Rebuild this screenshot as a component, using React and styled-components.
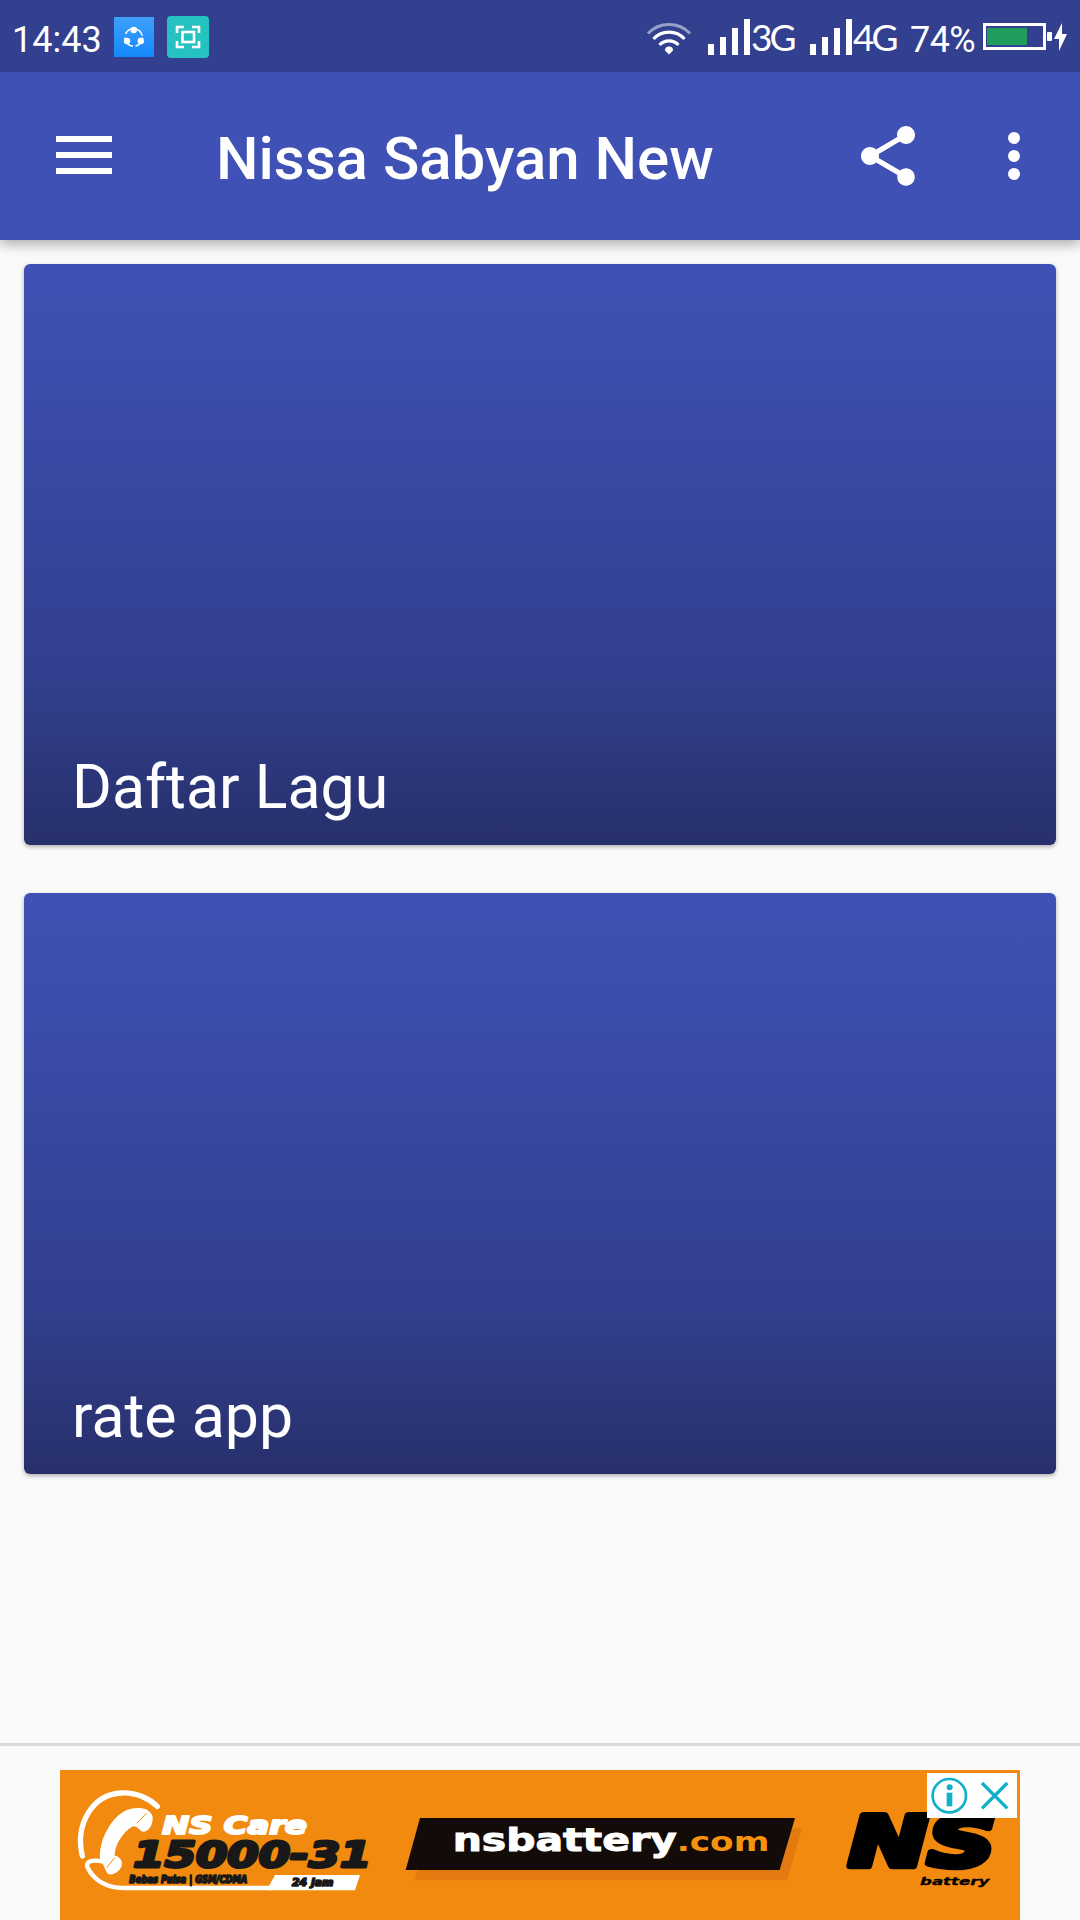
import React from "react";
import styled, { createGlobalStyle } from "styled-components";

const GlobalStyle = createGlobalStyle`
  * {
    box-sizing: border-box;
  }
  body {
    margin: 0;
    background: #fafafa;
    font-family: Roboto, "Liberation Sans", sans-serif;
  }
  svg {
    display: block;
    flex-shrink: 0;
  }
`;

const Screen = styled.div`
  width: 1080px;
  height: 1920px;
  overflow: hidden;
  display: flex;
  flex-direction: column;
  background: #fafafa;
`;

const StatusBar = styled.div`
  position: relative;
  z-index: 1;
  height: 72px;
  flex-shrink: 0;
  display: flex;
  align-items: center;
  padding: 2px 12px 0 12px;
  color: #fff;
  background: #32408f;
`;

const Clock = styled.span`
  width: 102px;
  font-size: 36px;
  line-height: 42px;
  padding-top: 6px;
`;

const Notifications = styled.div`
  display: flex;
  align-items: center;
  gap: 13px;
`;

const StatusIcons = styled.div`
  margin-left: auto;
  display: flex;
  align-items: center;
`;

const Signal = styled.div`
  display: flex;
  align-items: center;
  width: 102px;
`;

const Network = styled.span`
  font-family: Lato, sans-serif;
  font-size: 37px;
  line-height: 42px;
  letter-spacing: -3px;
`;

const Percent = styled.span`
  width: 73px;
  font-size: 36px;
  line-height: 42px;
  padding-top: 6px;
  letter-spacing: -0.6px;
`;

const AppBar = styled.header`
  height: 168px;
  flex-shrink: 0;
  display: flex;
  align-items: center;
  padding: 0 30px 0 56px;
  color: #fff;
  background: #3f51b5;
  box-shadow: 0 4px 12px rgba(0, 0, 0, 0.32);
`;

const Title = styled.h1`
  flex: 1;
  margin: 0 0 0 104px;
  padding-top: 6px;
  font-size: 60px;
  font-weight: 500;
  line-height: 72px;
`;

const Actions = styled.div`
  display: flex;
  gap: 54px;
`;

const List = styled.main`
  flex: 1;
  display: flex;
  flex-direction: column;
  gap: 48px;
  padding: 24px;
`;

const Card = styled.section`
  height: 581px;
  display: flex;
  align-items: flex-end;
  padding: 0 48px 21px;
  border-radius: 6px;
  color: #fff;
  font-size: 60.8px;
  line-height: 72px;
  background: linear-gradient(#3f51b5 0%, #323f8e 71%, #27306b 100%);
  box-shadow: 0 2px 4px rgba(0, 0, 0, 0.3);
`;

const AdSlot = styled.footer`
  height: 177px;
  flex-shrink: 0;
  padding: 24px 60px 0;
  border-top: 3px solid #dadada;
`;

const items = ["Daftar Lagu", "rate app"];

const ShareItIcon = () => (
  <svg width="40" height="40" viewBox="0 0 40 40">
    <defs>
      <linearGradient id="blue" x1="0" y1="0" x2="0" y2="1">
        <stop offset="0" stopColor="#3fa0fb" />
        <stop offset="1" stopColor="#1488fb" />
      </linearGradient>
    </defs>
    <rect width="40" height="40" fill="url(#blue)" />
    <circle cx="19.7" cy="20.5" r="8.8" fill="none" stroke="#fff" strokeWidth="1.5" strokeDasharray="12 2.5 13 3.5 22 2.3" />
    <circle cx="19.7" cy="13" r="3.2" fill="#fff" />
    <circle cx="13" cy="24" r="3.2" fill="#fff" />
    <circle cx="26.8" cy="24" r="3.2" fill="#fff" />
  </svg>
);

const CaptureIcon = () => (
  <svg width="42" height="42" viewBox="0 0 42 42">
    <rect width="42" height="42" rx="4" fill="#25c2c0" />
    <g fill="none" stroke="#fff" strokeWidth="2.6">
      <path d="M10 17v-6h7M25 11h7v6M32 25v6h-7M17 31h-7v-6" />
      <rect x="15.5" y="16" width="11.500" height="10" />
    </g>
  </svg>
);

const WifiIcon = () => (
  <svg width="46" height="36" viewBox="0 0 46 36">
    <g fill="none" stroke="#fff" strokeWidth="3.2">
      <path d="M2 14.5a29 29 0 0 1 42 0" opacity="0.5" />
      <path d="M7.5 20a21 21 0 0 1 31 0" />
      <path d="M13.5 26a13 13 0 0 1 19 0" />
    </g>
    <path d="M23 35.5l-4-4a4 4 0 0 1 8 0z" fill="#fff" />
  </svg>
);

const BarsIcon = () => (
  <svg width="43" height="36" viewBox="0 0 43 36" fill="#fff">
    <rect x="0" y="25" width="6" height="11" />
    <rect x="12" y="18" width="6" height="18" />
    <rect x="24" y="9" width="6" height="27" />
    <rect x="36" y="0" width="6" height="36" />
  </svg>
);

const BatteryIcon = () => (
  <svg width="85" height="28" viewBox="0 0 85 28">
    <rect x="1.5" y="1.5" width="60" height="24" fill="none" stroke="#fff" strokeWidth="3" />
    <rect x="4" y="5" width="40" height="17" fill="#1f9d5c" />
    <rect x="64" y="9" width="5" height="9" rx="1" fill="#fff" />
    <path d="M79 0l-8 16h5l0 12 8-17h-5z" fill="#fff" />
  </svg>
);

const MenuIcon = () => (
  <svg width="56" height="40" viewBox="0 0 56 40" fill="#fff">
    <rect y="0" width="56" height="6" />
    <rect y="16" width="56" height="6" />
    <rect y="32" width="56" height="6" />
  </svg>
);

const ShareIcon = () => (
  <svg width="72" height="72" viewBox="0 0 24 24" fill="#fff">
    <path d="M18 16.08c-.76 0-1.44.3-1.96.77L8.91 12.7c.05-.23.09-.46.09-.7s-.04-.47-.09-.7l7.05-4.11c.54.5 1.25.81 2.04.81 1.66 0 3-1.34 3-3s-1.34-3-3-3-3 1.34-3 3c0 .24.04.47.09.7L8.04 9.81C7.5 9.31 6.79 9 6 9c-1.66 0-3 1.34-3 3s1.34 3 3 3c.79 0 1.5-.31 2.04-.81l7.12 4.16c-.05.21-.08.43-.08.65 0 1.61 1.31 2.92 2.92 2.92s2.92-1.31 2.92-2.92-1.31-2.92-2.92-2.92z" />
  </svg>
);

const MoreIcon = () => (
  <svg width="72" height="72" viewBox="0 0 24 24" fill="#fff">
    <circle cx="12" cy="6" r="2" />
    <circle cx="12" cy="12" r="2" />
    <circle cx="12" cy="18" r="2" />
  </svg>
);

const Care = () => (
  <g transform="translate(-10 -35) scale(0.33333)">
    <g fill="none" stroke="#fff" strokeLinecap="round">
      <path d="M97 363C75 270 125 178 215 174C262 172 300 192 322 214" strokeWidth="16" />
      <path d="M160 380C125 372 108 380 112 396C130 435 170 459 220 459H665" strokeWidth="13" />
    </g>
    <path d="M150 372C146 310 190 235 240 222C270 215 300 220 308 245C310 270 295 290 280 290C266 288 266 274 250 274C225 285 195 325 194 362C210 365 220 378 214 396C205 412 190 420 176 418C166 410 165 395 150 372Z" fill="#fff" />
    <path d="M262 264l28-30M170 398l24-30" stroke="#f28a0f" strokeWidth="3" />
    <path d="M675 420H930L915 466H650Z" fill="#fff" />
    <g fontFamily="DejaVu Sans, sans-serif" fontWeight="700" fontStyle="italic" strokeLinejoin="round">
      <text x="337" y="296" fontSize="72" fill="#fff" stroke="#fff" strokeWidth="6" textLength="434" lengthAdjust="spacingAndGlyphs">NS Care</text>
      <text x="250" y="397" fontSize="106" fill="#181818" stroke="#181818" strokeWidth="9" textLength="714" lengthAdjust="spacingAndGlyphs">15000-31</text>
      <text x="238" y="445" fontSize="30" fill="#181818" stroke="#181818" strokeWidth="5" textLength="354" lengthAdjust="spacingAndGlyphs">Bebas Pulsa | GSM/CDMA</text>
      <text x="726" y="454" fontSize="32" fill="#181818" stroke="#181818" strokeWidth="5" textLength="124" lengthAdjust="spacingAndGlyphs">24 jam</text>
    </g>
  </g>
);

const Website = () => (
  <g transform="translate(320 -35) scale(0.33333)">
    <path d="M148 280H1266L1222 436H104Z" fill="#e37a10" />
    <path d="M120 249H1245L1199 405H77Z" fill="#120b07" />
    <text x="218" y="348" fontFamily="DejaVu Sans, sans-serif" fontWeight="700" fontSize="98" fill="#fff" stroke="#fff" strokeWidth="3" textLength="950" lengthAdjust="spacingAndGlyphs">
      nsbattery<tspan fontSize="82" fill="#f5930f" stroke="none">.com</tspan>
    </text>
  </g>
);

const Brand = () => (
  <g transform="translate(740 -35) scale(0.33333)">
    <g fontFamily="DejaVu Sans, sans-serif" fontWeight="700" fontStyle="italic" strokeLinejoin="round">
      <text x="146" y="393" fontSize="208" stroke="#000" strokeWidth="20" textLength="442" lengthAdjust="spacingAndGlyphs">NS</text>
      <text x="360" y="449" fontSize="32" stroke="#000" strokeWidth="1" textLength="208" lengthAdjust="spacingAndGlyphs">battery</text>
    </g>
  </g>
);

const AdBadge = () => (
  <g transform="translate(740 -35) scale(0.33333)">
    <rect x="381" y="114" width="270" height="135" fill="#fff" />
    <g fill="none" stroke="#0fb0c8" strokeWidth="8">
      <circle cx="448" cy="182" r="50" />
      <path d="M546 144L622 220M622 144L546 220" strokeWidth="10" />
    </g>
    <circle cx="449" cy="157" r="9" fill="#0fb0c8" />
    <rect x="440" y="173" width="17" height="41" fill="#0fb0c8" />
  </g>
);

const App = () => {
  return (
    <Screen>
      <GlobalStyle />
      <StatusBar>
        <Clock>14:43</Clock>
        <Notifications>
          <ShareItIcon />
          <CaptureIcon />
        </Notifications>
        <StatusIcons>
          <WifiIcon />
          <Signal style={{ marginLeft: 16 }}>
            <BarsIcon />
            <Network>3G</Network>
          </Signal>
          <Signal style={{ width: 100 }}>
            <BarsIcon />
            <Network>4G</Network>
          </Signal>
          <Percent>74%</Percent>
          <BatteryIcon />
        </StatusIcons>
      </StatusBar>
      <AppBar>
        <MenuIcon />
        <Title>Nissa Sabyan New</Title>
        <Actions>
          <ShareIcon />
          <MoreIcon />
        </Actions>
      </AppBar>
      <List>
        {items.map((item) => (
          <Card key={item}>{item}</Card>
        ))}
      </List>
      <AdSlot>
        <svg width="960" height="150" viewBox="0 0 960 150">
          <rect width="960" height="150" fill="#f28a0f" />
          <Care />
          <Website />
          <Brand />
          <AdBadge />
        </svg>
      </AdSlot>
    </Screen>
  );
};

export default App;
